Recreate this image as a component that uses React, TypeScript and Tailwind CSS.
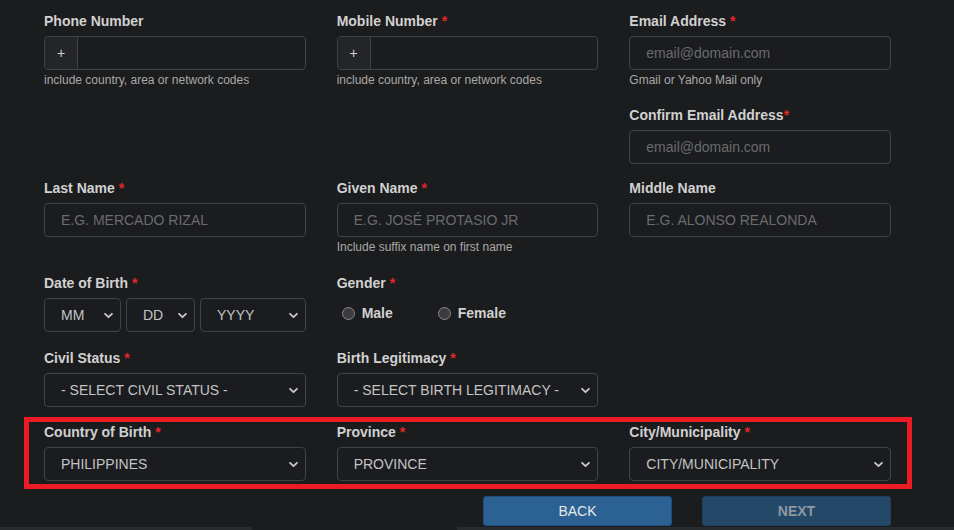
import React from "react";

const FONT = { fontFamily: '"Liberation Sans", Arial, sans-serif' };

function Chevron() {
  return (
    <svg width="11" height="11" viewBox="0 0 16 16" className="shrink-0">
      <path d="M3 5.5l5 5 5-5" fill="none" stroke="#c9c9c9" strokeWidth="2.6" strokeLinecap="round" strokeLinejoin="round" />
    </svg>
  );
}

function Label({ text, req, tight }: { text: string; req?: boolean; tight?: boolean }) {
  return (
    <div className="h-5 leading-5 mb-[5px] text-sm font-bold text-[#d1d1d1] whitespace-nowrap">
      {text}
      {req && <span className={`text-[#e3262b] ${tight ? "" : "ml-1"}`}>*</span>}
    </div>
  );
}

function Help({ text }: { text: string }) {
  return <div className="mt-[2px] h-4 leading-4 text-xs text-[#aaa9a6]">{text}</div>;
}

function TextInput({ placeholder }: { placeholder?: string }) {
  return (
    <input
      placeholder={placeholder}
      className="w-full h-[34px] rounded-[4px] border border-[#424346] bg-[#1b1c1f] px-4 text-sm text-[#d0d0d0] placeholder:text-[#6a6b6d] outline-none"
    />
  );
}

function PhoneInput() {
  return (
    <div className="flex h-[34px] w-full rounded-[4px] border border-[#424346] bg-[#1b1c1f] overflow-hidden">
      <div className="w-[33px] flex items-center justify-center bg-[#242528] border-r border-[#424346] text-sm text-[#d0d0d0]">+</div>
      <input className="flex-1 bg-transparent outline-none px-3 text-sm text-[#d0d0d0]" />
    </div>
  );
}

function Select({ value, w }: { value: string; w?: string }) {
  return (
    <div
      className={`flex items-center h-[34px] rounded-[4px] border border-[#424346] bg-[#1b1c1f] pl-4 pr-[6px] text-sm text-[#c4c4c4] ${w ?? "w-full"}`}
    >
      <span className="flex-1 whitespace-nowrap">{value}</span>
      <Chevron />
    </div>
  );
}

function Radio({ label }: { label: string }) {
  return (
    <div className="flex items-center gap-[7px]">
      <span className="w-[13px] h-[13px] rounded-full border border-[#8a8a8a] bg-[#3b3c3f]" />
      <span className="text-sm font-bold text-[#d1d1d1]">{label}</span>
    </div>
  );
}

export default function App() {
  return (
    <div style={FONT} className="w-[954px] h-[530px] bg-[#1b1c1e] overflow-hidden flex flex-col">
      <div className="pl-[44px] pr-[63px] pt-[11px]">
        {/* Contact */}
        <div className="grid grid-cols-3 gap-x-[31px]">
          <div>
            <Label text="Phone Number" />
            <PhoneInput />
            <Help text="include country, area or network codes" />
          </div>
          <div>
            <Label text="Mobile Number" req />
            <PhoneInput />
            <Help text="include country, area or network codes" />
          </div>
          <div>
            <Label text="Email Address" req />
            <TextInput placeholder="email@domain.com" />
            <Help text="Gmail or Yahoo Mail only" />
            <div className="mt-[17px]">
              <Label text="Confirm Email Address" req tight />
              <TextInput placeholder="email@domain.com" />
            </div>
          </div>
        </div>

        {/* Names */}
        <div className="grid grid-cols-3 gap-x-[31px] mt-[14px]">
          <div>
            <Label text="Last Name" req />
            <TextInput placeholder="E.G. MERCADO RIZAL" />
          </div>
          <div>
            <Label text="Given Name" req />
            <TextInput placeholder="E.G. JOSÉ PROTASIO JR" />
            <Help text="Include suffix name on first name" />
          </div>
          <div>
            <Label text="Middle Name" />
            <TextInput placeholder="E.G. ALONSO REALONDA" />
          </div>
        </div>

        {/* Birth / gender */}
        <div className="grid grid-cols-3 gap-x-[31px] mt-[18px]">
          <div>
            <Label text="Date of Birth" req />
            <div className="flex gap-[5px]">
              <Select value="MM" w="w-[77px]" />
              <Select value="DD" w="w-[69px]" />
              <Select value="YYYY" w="flex-1" />
            </div>
          </div>
          <div>
            <Label text="Gender" req />
            <div className="h-[30px] flex items-center gap-[45px] pl-[5px]">
              <Radio label="Male" />
              <Radio label="Female" />
            </div>
          </div>
          <div />
        </div>

        {/* Status */}
        <div className="grid grid-cols-3 gap-x-[31px] mt-[16px]">
          <div>
            <Label text="Civil Status" req />
            <Select value="- SELECT CIVIL STATUS -" />
          </div>
          <div>
            <Label text="Birth Legitimacy" req />
            <Select value="- SELECT BIRTH LEGITIMACY -" />
          </div>
          <div />
        </div>

        {/* Place of birth (highlighted) */}
        <div className="mt-[10px] -ml-[20px] -mr-[21px] border-[5px] border-[#ed1c24] pl-[15px] pr-[16px] pb-[3px]">
          <div className="grid grid-cols-3 gap-x-[31px]">
            <div>
              <Label text="Country of Birth" req />
              <Select value="PHILIPPINES" />
            </div>
            <div>
              <Label text="Province" req />
              <Select value="PROVINCE" />
            </div>
            <div>
              <Label text="City/Municipality" req />
              <Select value="CITY/MUNICIPALITY" />
            </div>
          </div>
        </div>

        {/* Actions */}
        <div className="mt-[7px] flex justify-end gap-[30px]">
          <button className="w-[189px] h-[30px] rounded-[3px] border border-[#1e4e7c] bg-[#2c6194] text-sm text-[#e8e8e8]">BACK</button>
          <button className="w-[189px] h-[30px] rounded-[3px] border border-[#1f3f5c] bg-[#244868] text-sm font-bold text-[#8d98a2]">NEXT</button>
        </div>
      </div>

      <div className="mt-auto h-[3px] flex">
        <div className="w-[252px] bg-[#2a2b2e]" />
        <div className="w-[205px]" />
        <div className="flex-1 bg-[#2a2b2e]" />
      </div>
    </div>
  );
}
